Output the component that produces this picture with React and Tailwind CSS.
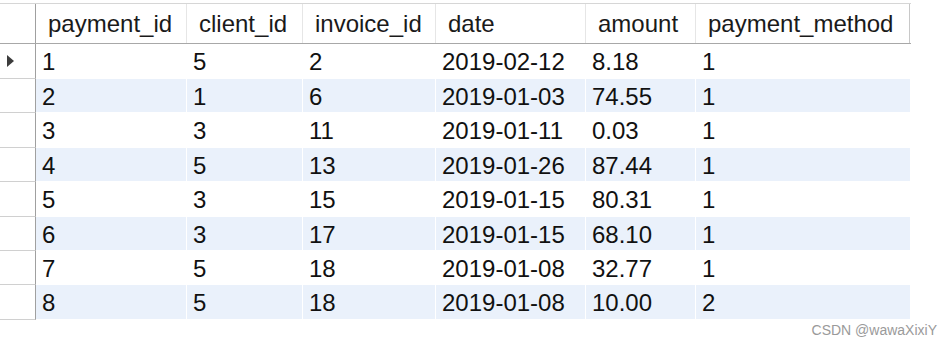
import React from "react";

const cols = [
  { key: "payment_id", w: "w-[151px]" },
  { key: "client_id", w: "w-[116px]" },
  { key: "invoice_id", w: "w-[133px]" },
  { key: "date", w: "w-[150px]" },
  { key: "amount", w: "w-[110px]" },
  { key: "payment_method", w: "w-[214px]" },
];

const rows = [
  ["1", "5", "2", "2019-02-12", "8.18", "1"],
  ["2", "1", "6", "2019-01-03", "74.55", "1"],
  ["3", "3", "11", "2019-01-11", "0.03", "1"],
  ["4", "5", "13", "2019-01-26", "87.44", "1"],
  ["5", "3", "15", "2019-01-15", "80.31", "1"],
  ["6", "3", "17", "2019-01-15", "68.10", "1"],
  ["7", "5", "18", "2019-01-08", "32.77", "1"],
  ["8", "5", "18", "2019-01-08", "10.00", "2"],
];

const heights = ["h-[35px]", "h-[34px]", "h-[35px]", "h-[34px]", "h-[35px]", "h-[34px]", "h-[34px]", "h-[35px]"];

export default function App() {
  return (
    <div
      className="w-[951px] h-[343px] bg-white text-[#111] overflow-hidden"
      style={{ fontFamily: '"Liberation Sans", Arial, sans-serif' }}
    >
      <div className="h-[3px] w-[910px] bg-white" />
      {/* header */}
      <div className="flex w-[911px] h-[41px] border-t border-b border-[#d6d6d6] border-b-[#a8a8a8]">
        <div className="w-[36px] shrink-0 border-r border-[#a0a0a0] bg-white" />
        {cols.map((c, i) => (
          <div
            key={c.key}
            className={`${c.w} shrink-0 flex items-center pl-[12px] text-[24px] leading-none text-[#1a1a1a] bg-white border-r ${
              i === cols.length - 1 ? "border-[#c8c8c8]" : "border-[#e6e6e6]"
            }`}
          >
            {c.key}
          </div>
        ))}
      </div>
      {/* body */}
      {rows.map((r, ri) => (
        <div key={ri} className={`flex w-[910px] ${heights[ri]}`}>
          <div className="w-[36px] shrink-0 border-r border-b border-r-[#a0a0a0] border-b-[#d0d0d0] bg-white flex items-center pl-[7px]">
            {ri === 0 && (
              <svg width="7" height="12" viewBox="0 0 7 12">
                <polygon points="0,0 7,6 0,12" fill="#3c3c3c" />
              </svg>
            )}
          </div>
          {r.map((v, ci) => (
            <div
              key={ci}
              className={`${cols[ci].w} shrink-0 flex items-center pl-[6px] pt-[2px] text-[24px] leading-none text-[#111] border-b border-white ${
                ci < r.length - 1 ? "border-r" : ""
              } ${ri % 2 === 1 ? "bg-[#eaf1fb]" : "bg-white"}`}
            >
              {v}
            </div>
          ))}
        </div>
      ))}
      <div className="flex justify-end pr-[14px] pt-[1px]">
        <span className="text-[14px] leading-[18px] text-[#9a9a9a]">CSDN @wawaXixiY</span>
      </div>
    </div>
  );
}
